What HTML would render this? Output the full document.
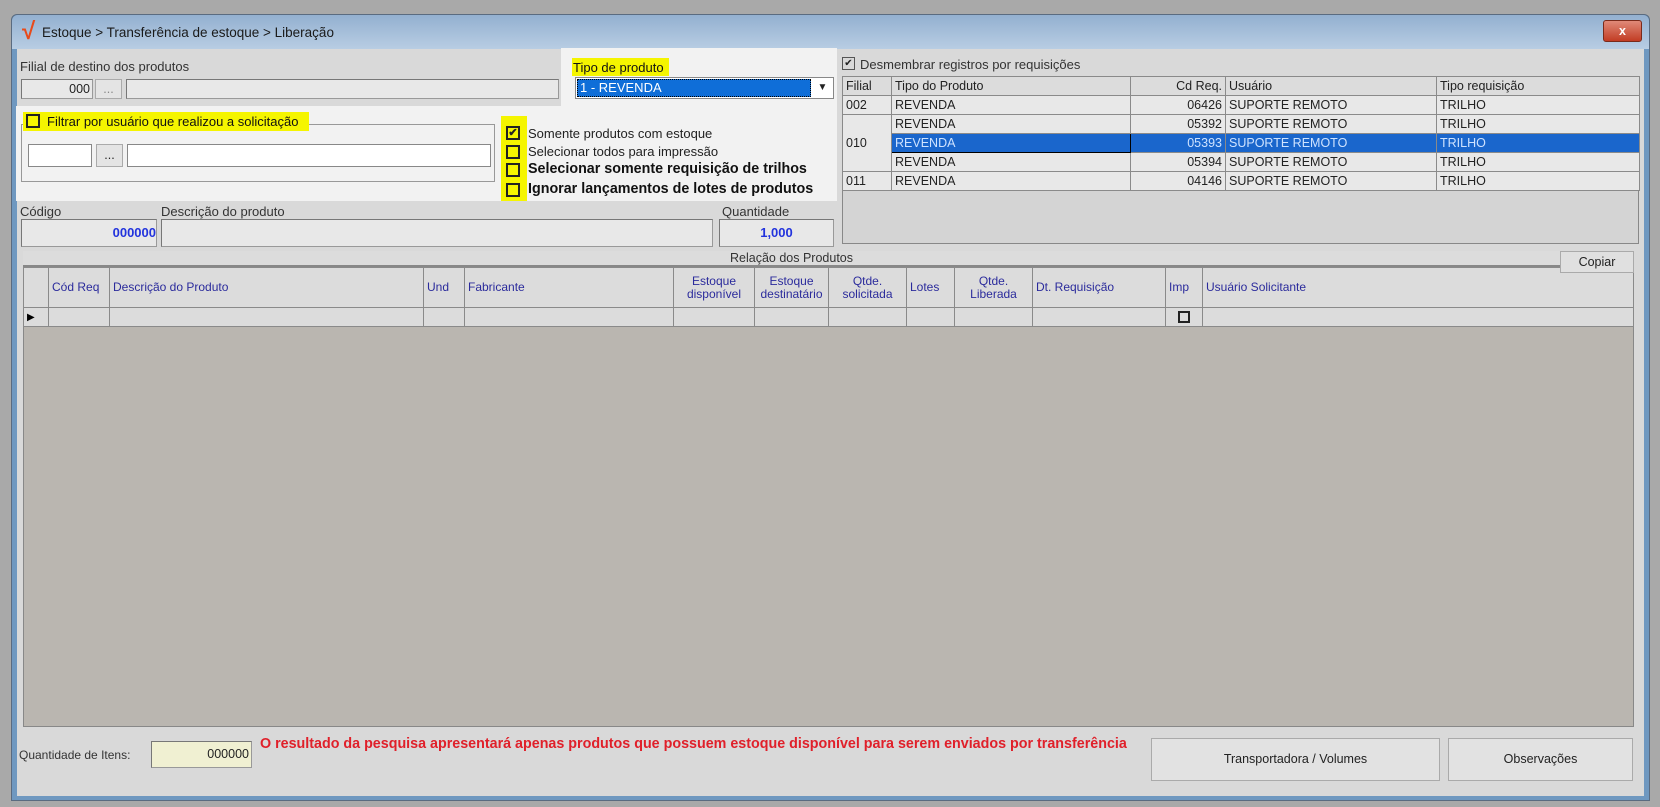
<!DOCTYPE html><html><head><meta charset="utf-8"><style>
*{box-sizing:border-box}
body{margin:0;width:1660px;height:807px;background:#a9a9a9;font-family:"Liberation Sans",sans-serif;font-size:12.5px;color:#222;position:relative;overflow:hidden}
.a{position:absolute}
.in{position:absolute;background:#e8e8e8;border:1px solid #999;border-top-color:#777;border-left-color:#777}
.w{background:#fff}
.btn{position:absolute;background:#e4e4e4;border:1px solid #aaa;text-align:center}
.cb{position:absolute;width:14px;height:14px;border:2px solid #222;background:transparent}
.hl{position:absolute;background:#f5f500}
table{border-collapse:collapse;position:absolute;table-layout:fixed}
td{border:1px solid #8a8a8a;padding:0 3px;height:19px;white-space:nowrap;overflow:hidden}
.g td{background:#e8e8e8}
.h td{background:#dcdcdc}
.sel td{background:#1a66cc;color:#cfe3ff}
.bh td{background:#dcdcdc;color:#2b2b9c;font-size:12px;line-height:13px;vertical-align:middle}
</style></head><body>
<div class="a" style="left:11px;top:14px;width:1639px;height:787px;background:#6f98c0;border:1px solid #5a6b80;border-radius:6px 6px 0 0"></div>
<div class="a" style="left:12px;top:15px;width:1637px;height:34px;background:linear-gradient(#93b0d0,#b8cde3);border-radius:6px 6px 0 0"></div>
<div class="a" style="left:22px;top:20px;color:#e84a1a;font-size:24px;font-weight:bold;line-height:24px">√</div>
<div class="a" style="left:42px;top:25px;font-size:13.5px;color:#1a1a1a">Estoque &gt; Transferência de estoque &gt; Liberação</div>
<div class="a" style="left:1603px;top:20px;width:39px;height:22px;background:linear-gradient(#e08a78,#c23c24);border:1px solid #7a2a1a;border-radius:3px;color:#fff;text-align:center;font-weight:bold;line-height:20px">x</div>
<div class="a" style="left:17px;top:49px;width:1627px;height:747px;background:#d9d9d9"></div>

<div class="a" style="left:20px;top:59px;color:#333;font-size:13px">Filial de destino dos produtos</div>
<div class="in" style="left:21px;top:79px;width:72px;height:20px;text-align:right;padding-right:2px;line-height:18px">000</div>
<div class="btn" style="left:95px;top:79px;width:27px;height:20px;line-height:18px;color:#888">...</div>
<div class="in" style="left:126px;top:79px;width:433px;height:20px"></div>

<div class="a" style="left:561px;top:48px;width:276px;height:58px;background:#f2f2f2"></div>
<div class="hl" style="left:572px;top:58px;width:97px;height:18px"></div>
<div class="a" style="left:573px;top:60px;color:#111;font-size:13px">Tipo de produto</div>
<div class="a" style="left:575px;top:77px;width:259px;height:22px;background:#fff;border:1px solid #888"></div>
<div class="a" style="left:577px;top:79px;width:234px;height:18px;background:#0f6ed8;border:1px dotted #000;color:#fff;padding-left:2px;line-height:16px;font-size:13px">1 - REVENDA</div>
<div class="a" style="left:813px;top:79px;width:19px;height:18px;font-size:10px;text-align:center;line-height:18px">▼</div>

<div class="a" style="left:16px;top:106px;width:821px;height:95px;background:#f2f2f2"></div>
<div class="a" style="left:21px;top:124px;width:474px;height:58px;border:1px solid #999"></div>
<div class="hl" style="left:23px;top:112px;width:286px;height:19px"></div>
<div class="cb" style="left:26px;top:114px"></div>
<div class="a" style="left:47px;top:114px;color:#111;font-size:13px">Filtrar por usuário que realizou a solicitação</div>
<div class="a w" style="left:28px;top:144px;width:64px;height:23px;border:1px solid #888"></div>
<div class="btn" style="left:96px;top:144px;width:27px;height:23px;line-height:20px">...</div>
<div class="a w" style="left:127px;top:144px;width:364px;height:23px;border:1px solid #888"></div>

<div class="hl" style="left:501px;top:116px;width:26px;height:85px"></div>
<div class="cb" style="left:506px;top:126px;font-size:11px;line-height:10px;text-align:center;font-weight:bold">✔</div>
<div class="cb" style="left:506px;top:145px"></div>
<div class="cb" style="left:506px;top:163px"></div>
<div class="cb" style="left:506px;top:183px"></div>
<div class="a" style="left:528px;top:126px;color:#222;font-size:13px">Somente produtos com estoque</div>
<div class="a" style="left:528px;top:144px;color:#222;font-size:13px">Selecionar todos para impressão</div>
<div class="a" style="left:528px;top:161px;color:#111;font-size:14.3px;font-weight:bold">Selecionar somente requisição de trilhos</div>
<div class="a" style="left:528px;top:181px;color:#111;font-size:14.3px;font-weight:bold">Ignorar lançamentos de lotes de produtos</div>

<div class="a" style="left:20px;top:204px;color:#333;font-size:13px">Código</div>
<div class="a" style="left:161px;top:204px;color:#333;font-size:13px">Descrição do produto</div>
<div class="a" style="left:722px;top:204px;color:#333;font-size:13px">Quantidade</div>
<div class="in" style="left:21px;top:219px;width:136px;height:28px;text-align:right;color:#2233dd;font-weight:bold;line-height:26px;font-size:13px">000000</div>
<div class="in" style="left:161px;top:219px;width:552px;height:28px"></div>
<div class="in" style="left:719px;top:219px;width:115px;height:28px;text-align:center;color:#2233dd;font-weight:bold;line-height:26px;font-size:13px">1,000</div>

<div class="cb" style="left:842px;top:57px;border-width:1px;border-color:#555;width:13px;height:13px;font-size:10px;line-height:11px;text-align:center">✔</div>
<div class="a" style="left:860px;top:57px;color:#333;font-size:13px">Desmembrar registros por requisições</div>
<div class="a" style="left:842px;top:76px;width:797px;height:168px;background:#d4d4d4;border:1px solid #888"></div>
<table class="g" style="left:842px;top:76px;width:797px">
<colgroup><col style="width:49px"><col style="width:239px"><col style="width:95px"><col style="width:211px"><col style="width:203px"></colgroup>
<tr class="h"><td>Filial</td><td>Tipo do Produto</td><td style="text-align:right">Cd Req.</td><td>Usuário</td><td>Tipo requisição</td></tr>
<tr><td>002</td><td>REVENDA</td><td style="text-align:right">06426</td><td>SUPORTE REMOTO</td><td>TRILHO</td></tr>
<tr><td rowspan="3" style="border-bottom:1px solid #8a8a8a">010</td><td>REVENDA</td><td style="text-align:right">05392</td><td>SUPORTE REMOTO</td><td>TRILHO</td></tr>
<tr class="sel"><td style="border:1px solid #000">REVENDA</td><td style="text-align:right">05393</td><td>SUPORTE REMOTO</td><td>TRILHO</td></tr>
<tr><td>REVENDA</td><td style="text-align:right">05394</td><td>SUPORTE REMOTO</td><td>TRILHO</td></tr>
<tr><td>011</td><td>REVENDA</td><td style="text-align:right">04146</td><td>SUPORTE REMOTO</td><td>TRILHO</td></tr>
</table>

<div class="a" style="left:23px;top:251px;width:1611px;height:476px;background:#bab6b0;border:1px solid #888"></div>
<div class="a" style="left:23px;top:251px;width:1537px;height:16px;background:#dcdcdc;border-bottom:2px solid #888;text-align:center;line-height:14px;color:#333">Relação dos Produtos</div>
<table class="bh" style="left:23px;top:267px;width:1611px">
<colgroup><col style="width:25px"><col style="width:61px"><col style="width:314px"><col style="width:41px"><col style="width:209px"><col style="width:81px"><col style="width:74px"><col style="width:78px"><col style="width:48px"><col style="width:78px"><col style="width:133px"><col style="width:37px"><col></colgroup>
<tr style="height:40px"><td></td><td>Cód Req</td><td>Descrição do Produto</td><td>Und</td><td>Fabricante</td><td style="text-align:center">Estoque<br>disponível</td><td style="text-align:center">Estoque<br>destinatário</td><td style="text-align:center">Qtde.<br>solicitada</td><td>Lotes</td><td style="text-align:center">Qtde.<br>Liberada</td><td>Dt. Requisição</td><td>Imp</td><td>Usuário Solicitante</td></tr>
<tr class="g"><td style="background:#dcdcdc;color:#000;font-size:10px">▶</td><td></td><td></td><td></td><td></td><td></td><td></td><td></td><td></td><td></td><td></td><td style="text-align:center"><span style="display:inline-block;width:12px;height:12px;border:2px solid #222;vertical-align:middle"></span></td><td></td></tr>
</table>
<div class="btn" style="left:1560px;top:251px;width:74px;height:22px;line-height:20px;z-index:2;background:#e0e0e0">Copiar</div>

<div class="a" style="left:19px;top:748px;color:#333;font-size:12px">Quantidade de Itens:</div>
<div class="in" style="left:151px;top:741px;width:101px;height:27px;background:#f0f0d2;text-align:right;line-height:25px;padding-right:2px">000000</div>
<div class="a" style="left:260px;top:736px;color:#e0202a;font-weight:bold;font-size:14.3px;width:882px;overflow:hidden;white-space:nowrap">O resultado da pesquisa apresentará apenas produtos que possuem estoque disponível para serem enviados por transferência</div>
<div class="btn" style="left:1151px;top:738px;width:289px;height:43px;line-height:41px;background:#e2e2e2">Transportadora / Volumes</div>
<div class="btn" style="left:1448px;top:738px;width:185px;height:43px;line-height:41px;background:#e2e2e2">Observações</div>
</body></html>
